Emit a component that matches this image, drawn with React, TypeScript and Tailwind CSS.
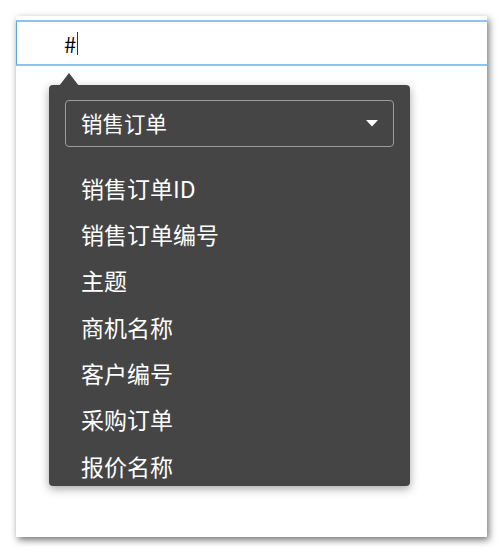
import React from "react";

const fields = ["销售订单ID", "销售订单编号", "主题", "商机名称", "客户编号", "采购订单", "报价名称"];

export default function App() {
  return (
    <div
      className="w-[503px] h-[553px] bg-white p-4"
      style={{ fontFamily: '"Noto Sans CJK SC", "Noto Sans", sans-serif' }}
    >
      <div className="relative w-[471px] h-[521px] bg-white shadow-[2px_3px_7px_rgba(0,0,0,0.55)] pt-1">
        {/* input */}
        <div className="h-[46px] border-y-2 border-[#8ec3f0] border-l border-l-[#5ea6e8] flex items-center pl-[47px]">
          <span className="text-[22px] leading-none text-black">#</span>
          <span className="ml-[1px] h-[23px] border-l border-[#333]" />
        </div>

        {/* popover */}
        <div className="absolute left-[33px] top-[69px] w-[361px] h-[401px] rounded-[4px] bg-[#454545] shadow-[0_3px_10px_rgba(0,0,0,0.35)]">
          <div className="absolute -top-[12px] left-[10px] w-0 h-0 border-x-[10px] border-x-transparent border-b-[13px] border-b-[#454545]" />
          <div className="h-full overflow-hidden rounded-[4px] pt-[15px] px-4">
            <div className="h-[47px] rounded-[4px] border border-[#9d9d9d] flex items-center justify-between pl-[15px] pr-[15px]">
              <span className="text-[21.5px] text-white">销售订单</span>
              <svg width="12" height="7" viewBox="0 0 12 7">
                <path d="M0 0 L12 0 L6 6.5 Z" fill="#ffffff" />
              </svg>
            </div>
            <div className="mt-[18px] pl-4 flex flex-col">
              {fields.map((f) => (
                <div key={f} className="h-[46.3px] shrink-0 flex items-center text-[23px] text-white">
                  {f}
                </div>
              ))}
            </div>
          </div>
        </div>
      </div>
    </div>
  );
}
